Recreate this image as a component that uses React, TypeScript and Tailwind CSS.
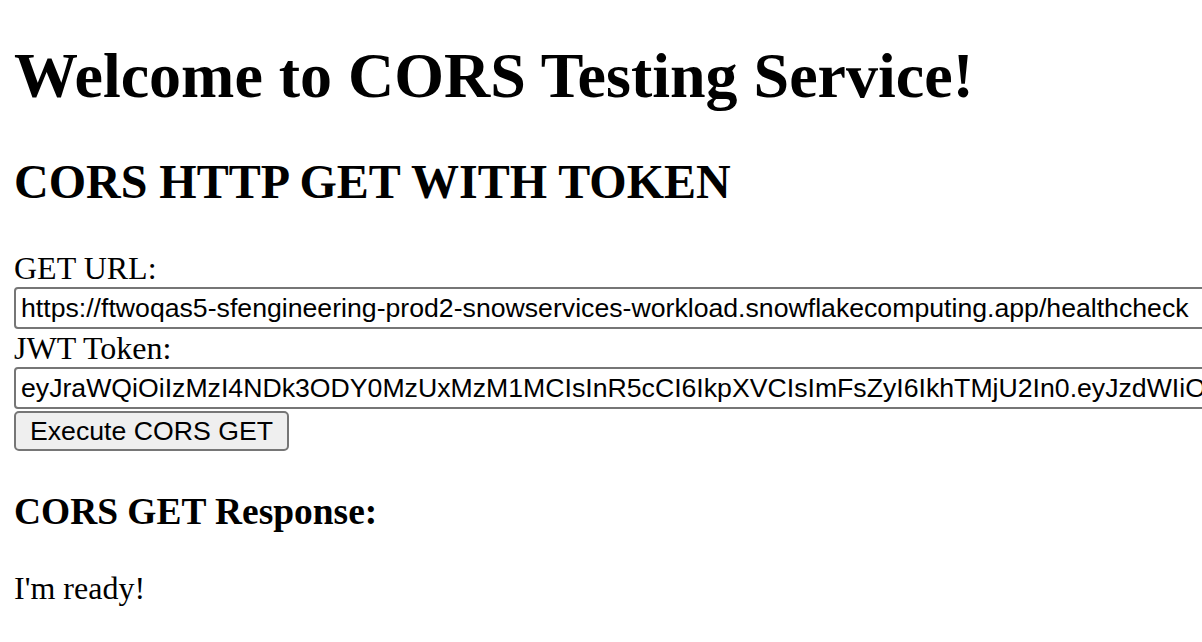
import { useState } from "react";

const URL_VALUE =
  "https://ftwoqas5-sfengineering-prod2-snowservices-workload.snowflakecomputing.app/healthcheck";
const TOKEN_VALUE =
  "eyJraWQiOiIzMzI4NDk3ODY0MzUxMzM1MCIsInR5cCI6IkpXVCIsImFsZyI6IkhTMjU2In0.eyJzdWIiOiJDT1JTX1RFU1QiLCJpYXQiOjE3MDAwMDAwMDB9.c2lnbmF0dXJl";

export default function App() {
  const [url, setUrl] = useState(URL_VALUE);
  const [token, setToken] = useState(TOKEN_VALUE);
  const [response] = useState("I'm ready!");

  const inputCls =
    "block h-[42px] w-[1260px] shrink-0 rounded-[4px] border-2 border-[#767676] bg-white px-[5px] text-[26.67px] text-black outline-none [font-family:'Liberation_Sans',Arial,sans-serif]";

  return (
    <div className="min-h-[642px] w-full overflow-hidden bg-white text-black [font-family:'Liberation_Serif','Times_New_Roman',serif]">
      <div className="flex flex-col items-start pl-[14px] pt-[39px]">
        <h1 className="text-[64px] font-bold leading-[74px] whitespace-nowrap">
          Welcome to CORS Testing Service!
        </h1>
        <h2 className="mt-[41px] text-[48px] font-bold leading-[55px] whitespace-nowrap">
          CORS HTTP GET WITH TOKEN
        </h2>

        <label className="mt-[40px] text-[32px] leading-[38px]">GET URL:</label>
        <input
          className={inputCls}
          value={url}
          onChange={(e) => setUrl(e.target.value)}
        />
        <label className="text-[32px] leading-[38px]">JWT Token:</label>
        <input
          className={inputCls}
          value={token}
          onChange={(e) => setToken(e.target.value)}
        />
        <button className="mt-[2px] h-[40px] rounded-[5px] border-2 border-[#767676] bg-[#efefef] px-[14px] text-[26.67px] leading-none text-black [font-family:'Liberation_Sans',Arial,sans-serif]">
          Execute CORS GET
        </button>

        <h3 className="mt-[39px] text-[37.44px] font-bold leading-[43px]">
          CORS GET Response:
        </h3>
        <p className="mt-[37px] text-[32px] leading-[37px]">{response}</p>
      </div>
    </div>
  );
}
